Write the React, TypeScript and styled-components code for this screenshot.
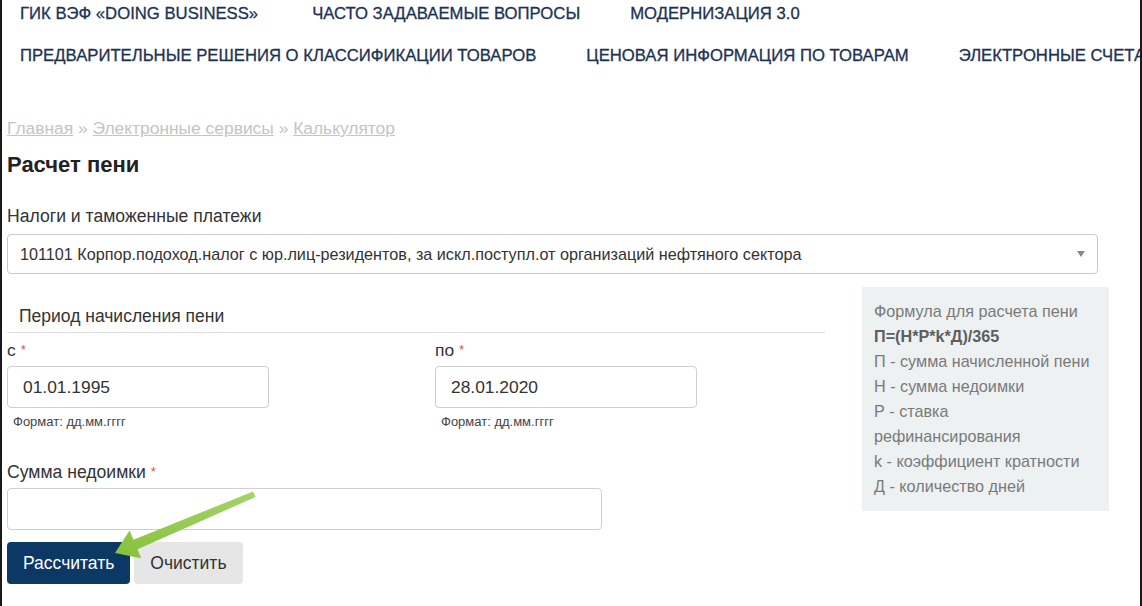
import React from "react";
import styled, { createGlobalStyle } from "styled-components";

const Global = createGlobalStyle`
  html, body { margin: 0; padding: 0; background: #fff; }
  body { font-family: "Liberation Sans", Arial, sans-serif; color: #333; }
  * { box-sizing: border-box; }
`;

const Page = styled.div`
  position: relative;
  width: 1142px;
  height: 606px;
  overflow: hidden;
  border-left: 2px solid #1a1a1a;
  border-right: 2px solid #1a1a1a;
  padding-left: 5px;
`;

const Nav = styled.nav`
  padding: 1px 0 0 13px;
  display: flex;
  flex-direction: column;
  gap: 16px;
`;

const NavRow = styled.div`
  display: flex;
  white-space: nowrap;
  height: 26px;
  align-items: center;
  gap: 50px;
`;

const NavLink = styled.a<{ $extra?: number }>`
  font-size: 16.7px;
  color: #1c3251;
  text-transform: uppercase;
  text-decoration: none;
  -webkit-text-stroke: 0.3px #1c3251;
  margin-right: ${(p) => p.$extra || 0}px;
`;

const Crumbs = styled.div`
  margin-top: 48px;
  font-size: 17.4px;
  line-height: 22px;
  color: #c4c4c4;
`;

const Crumb = styled.a`
  color: #c4c4c4;
  text-decoration: underline;
`;

const Title = styled.h1`
  margin: 12px 0 0;
  font-size: 22px;
  line-height: 28px;
  font-weight: bold;
  color: #222;
`;

const Label = styled.div<{ $top: number }>`
  margin-top: ${(p) => p.$top}px;
  font-size: 17.6px;
  line-height: 22px;
  color: #333;
`;

const Req = styled.span`
  color: #d9534f;
  font-size: 13px;
  vertical-align: top;
  margin-left: 5px;
`;

const Select = styled.div`
  margin-top: 7px;
  width: 1091px;
  height: 40px;
  border: 1px solid #c9c9c9;
  border-radius: 4px;
  display: flex;
  align-items: center;
  justify-content: space-between;
  padding: 0 12px;
  font-size: 16.2px;
  color: #333;
`;

const Caret = styled.span`
  width: 0;
  height: 0;
  border-left: 4px solid transparent;
  border-right: 4px solid transparent;
  border-top: 6px solid #888;
`;

const Main = styled.div`
  margin-top: 13px;
  display: flex;
  gap: 37px;
  align-items: flex-start;
`;

const FormCol = styled.div`
  width: 818px;
  padding-top: 18px;
`;

const Legend = styled.div`
  padding: 0 0 5px 12px;
  font-size: 17.5px;
  line-height: 22px;
  color: #333;
  border-bottom: 1px solid #ddd;
`;

const DateRow = styled.div`
  display: grid;
  grid-template-columns: 428px 1fr;
  margin-top: 7px;
`;

const Field = styled.div``;

const SmallLabel = styled.div`
  font-size: 17.4px;
  line-height: 20px;
  color: #333;
`;

const Input = styled.div<{ $w: number; $top: number }>`
  margin-top: ${(p) => p.$top}px;
  width: ${(p) => p.$w}px;
  height: 42px;
  border: 1px solid #cfcfcf;
  border-radius: 4px;
  display: flex;
  align-items: center;
  padding-left: 15px;
  font-size: 17.4px;
  color: #333;
`;

const Help = styled.div`
  margin-top: 6px;
  padding-left: 6px;
  font-size: 13px;
  line-height: 16px;
  color: #444;
`;

const Buttons = styled.div`
  margin-top: 12px;
  display: flex;
  gap: 4px;
`;

const Button = styled.button<{ $primary?: boolean }>`
  height: 42px;
  padding: 0 16px;
  border: none;
  border-radius: 4px;
  font-family: "Liberation Sans", Arial, sans-serif;
  font-size: 17.5px;
  background: ${(p) => (p.$primary ? "#0c3866" : "#e6e6e6")};
  color: ${(p) => (p.$primary ? "#fff" : "#333")};
`;

const Aside = styled.aside`
  width: 247px;
  background: #eef1f2;
  padding: 12px;
  font-size: 16.2px;
  line-height: 25px;
  color: #7a7a7a;
  white-space: nowrap;
`;

const Strong = styled.div`
  font-weight: bold;
  color: #5e5e5e;
`;

const ArrowLayer = styled.svg`
  position: absolute;
  left: 0;
  top: 0;
  pointer-events: none;
`;

export default function App() {
  return (
    <>
      <Global />
      <Page>
        <Nav>
          <NavRow>
            <NavLink $extra={4}>ГИК ВЭФ «DOING BUSINESS»</NavLink>
            <NavLink>Часто задаваемые вопросы</NavLink>
            <NavLink>Модернизация 3.0</NavLink>
          </NavRow>
          <NavRow>
            <NavLink>Предварительные решения о классификации товаров</NavLink>
            <NavLink>Ценовая информация по товарам</NavLink>
            <NavLink>Электронные счета</NavLink>
          </NavRow>
        </Nav>

        <Crumbs>
          <Crumb>Главная</Crumb> » <Crumb>Электронные сервисы</Crumb> » <Crumb>Калькулятор</Crumb>
        </Crumbs>
        <Title>Расчет пени</Title>

        <Label $top={26}>Налоги и таможенные платежи</Label>
        <Select>
          <span>101101 Корпор.подоход.налог с юр.лиц-резидентов, за искл.поступл.от организаций нефтяного сектора</span>
          <Caret />
        </Select>

        <Main>
          <FormCol>
            <Legend>Период начисления пени</Legend>
            <DateRow>
              <Field>
                <SmallLabel>с<Req>*</Req></SmallLabel>
                <Input $w={262} $top={6}>01.01.1995</Input>
                <Help>Формат: дд.мм.гггг</Help>
              </Field>
              <Field>
                <SmallLabel>по<Req>*</Req></SmallLabel>
                <Input $w={262} $top={6}>28.01.2020</Input>
                <Help>Формат: дд.мм.гггг</Help>
              </Field>
            </DateRow>
            <Label $top={31}>Сумма недоимки<Req>*</Req></Label>
            <Input $w={595} $top={5} />
            <Buttons>
              <Button $primary>Рассчитать</Button>
              <Button>Очистить</Button>
            </Buttons>
          </FormCol>
          <Aside>
            <div>Формула для расчета пени</div>
            <Strong>П=(Н*Р*k*Д)/365</Strong>
            <div>П - сумма начисленной пени</div>
            <div>Н - сумма недоимки</div>
            <div>Р - ставка</div>
            <div>рефинансирования</div>
            <div>k - коэффициент кратности</div>
            <div>Д - количество дней</div>
          </Aside>
        </Main>

        <ArrowLayer width="1142" height="606" viewBox="0 0 1142 606">
          <defs>
            <linearGradient id="ag" x1="0" y1="1" x2="1" y2="0">
              <stop offset="0" stopColor="#86c23a" />
              <stop offset="1" stopColor="#a6d36a" />
            </linearGradient>
          </defs>
          <polygon
            points="253.5,497 251,491.5 131.5,539.8 127.5,530.6 113,553 139.2,558.2 135.5,549.2"
            fill="url(#ag)"
          />
        </ArrowLayer>
      </Page>
    </>
  );
}
